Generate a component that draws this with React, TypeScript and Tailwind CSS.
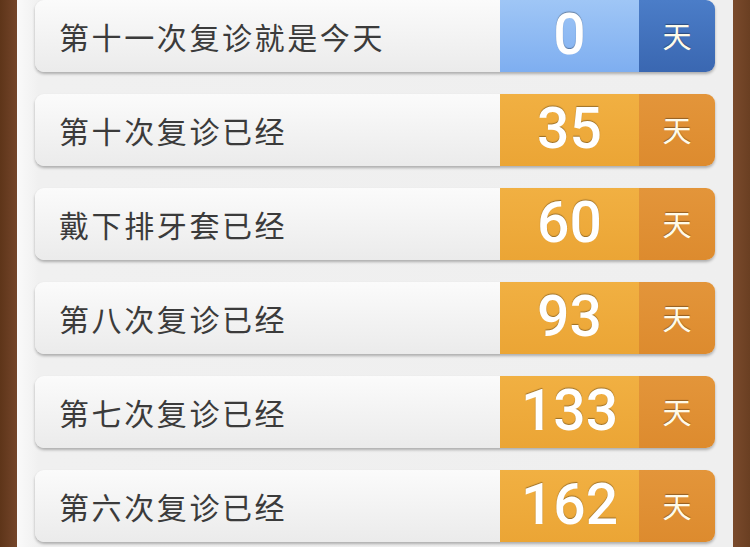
import React from "react";

type Visit = {
	label: string;
	days: number;
	today?: boolean;
};

const visits: Visit[] = [
	{ label: "第十一次复诊就是今天", days: 0, today: true },
	{ label: "第十次复诊已经", days: 35 },
	{ label: "戴下排牙套已经", days: 60 },
	{ label: "第八次复诊已经", days: 93 },
	{ label: "第七次复诊已经", days: 133 },
	{ label: "第六次复诊已经", days: 162 },
];

const cjk = "font-['PingFang_SC','Noto_Sans_CJK_SC',sans-serif]";

function Row({ item }: { item: Visit }): JSX.Element {
	return (
		<div className="flex h-[72px] shrink-0 rounded-[9px] overflow-hidden shadow-[0_2px_3px_rgba(0,0,0,0.28)]">
			<div className="flex-1 flex items-center pl-[24px] bg-gradient-to-b from-[#fbfbfb] to-[#ebebeb]">
				<span className={`${cjk} text-[30px] tracking-[2.6px] text-[#3b3b3b]`}>{item.label}</span>
			</div>
			<div
				className={
					item.today
						? "w-[139px] flex items-center justify-center pb-[3px] bg-gradient-to-b from-[#9fc6f6] to-[#7eaef0]"
						: "w-[139px] flex items-center justify-center pb-[3px] bg-gradient-to-b from-[#f1b042] to-[#eba535]"
				}
			>
				<span className="font-['Roboto',sans-serif] text-[57px] font-medium leading-none text-white [text-shadow:0_-1px_1px_rgba(0,0,0,0.35)]">
					{item.days}
				</span>
			</div>
			<div
				className={
					item.today
						? "w-[76px] flex items-center justify-center pb-[2px] bg-gradient-to-b from-[#4b7dc8] to-[#3a67b1]"
						: "w-[76px] flex items-center justify-center pb-[2px] bg-gradient-to-b from-[#e3953a] to-[#dd8b2e]"
				}
			>
				<span
					className={`${cjk} text-[29px] leading-none text-[#fffbea] [text-shadow:0_-1px_1px_rgba(0,0,0,0.35)]`}
				>
					天
				</span>
			</div>
		</div>
	);
}

export default function App(): JSX.Element {
	return (
		<div className="w-[750px] h-[547px] flex overflow-hidden bg-[#6a3f22]">
			<div className="w-[17px] shrink-0 bg-gradient-to-r from-[#5e3519] to-[#74452a]" />
			<div className="flex-1 bg-gradient-to-r from-[#fafafa] via-[#f0f0f0] via-[3%] to-[#efefef] px-[18px] flex flex-col gap-[22px]">
				{visits.map((item) => (
					<Row key={item.label} item={item} />
				))}
			</div>
			<div className="w-[17px] shrink-0 bg-gradient-to-r from-[#7a4a2c] to-[#6a3f22]" />
		</div>
	);
}
